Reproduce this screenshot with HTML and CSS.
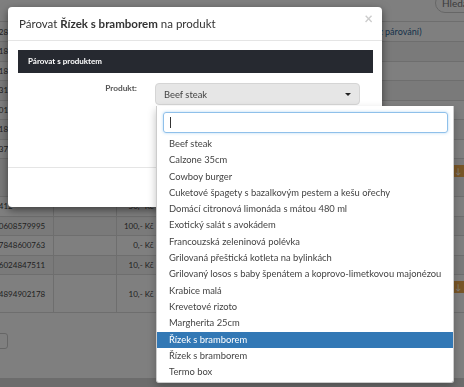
FILE: index.html
```html
<!DOCTYPE html>
<html lang="cs">
<head>
    <meta charset="UTF-8">
    <title>Párovat produkt</title>
    <link rel="stylesheet" href="styles.css">
</head>
<body>

    <div class="page">
        <div class="toolbar">
            <button class="search-btn">Hledat</button>
        </div>

        <table class="items">
            <tr><td>85940128</td><td></td><td class="price">120,- Kč</td><td></td><td class="state">(bez párování)</td><td></td></tr>
            <tr class="odd"><td>85940118</td><td></td><td class="price">90,- Kč</td><td></td><td></td><td></td></tr>
            <tr><td>85940118</td><td></td><td class="price">90,- Kč</td><td></td><td></td><td></td></tr>
            <tr class="odd"><td>85940131</td><td></td><td class="price">45,- Kč</td><td></td><td></td><td></td></tr>
            <tr><td>85940101</td><td></td><td class="price">35,- Kč</td><td></td><td></td><td></td></tr>
            <tr class="odd"><td>85940118</td><td></td><td class="price">60,- Kč</td><td></td><td></td><td></td></tr>
            <tr><td>85940137</td><td></td><td class="price">60,- Kč</td><td></td><td></td><td></td></tr>
            <tr class="odd tall"><td></td><td></td><td></td><td></td><td></td><td><span class="badge">↓</span></td></tr>
            <tr><td>859401412</td><td></td><td class="price">50,- Kč</td><td></td><td></td><td></td></tr>
            <tr class="odd"><td>8590630608579995</td><td></td><td class="price">100,- Kč</td><td></td><td></td><td></td></tr>
            <tr><td>8590617848600763</td><td></td><td class="price">0,- Kč</td><td></td><td></td><td></td></tr>
            <tr class="odd"><td>8590606024847511</td><td></td><td class="price">10,- Kč</td><td></td><td></td><td></td></tr>
            <tr class="tall"><td>8590634894902178</td><td></td><td class="price">10,- Kč</td><td></td><td></td><td><span class="badge">↓</span></td></tr>
        </table>

        <div class="pager">
            <button class="pager-btn">Další</button>
        </div>

        <div class="footer"></div>
    </div>

    <div class="backdrop"></div>

    <div class="modal">
        <div class="modal-header">
            <h4 class="modal-title">Párovat <b>Řízek s bramborem</b> na produkt</h4>
            <span class="close">&times;</span>
        </div>
        <div class="modal-body">
            <div class="panel-heading">Párovat s produktem</div>
            <div class="form-row">
                <label class="form-label">Produkt:</label>
                <div class="select">
                    <span>Beef steak</span>
                    <span class="caret"></span>
                </div>
            </div>
        </div>
        <div class="modal-footer"></div>
    </div>

    <!-- otevřený výběr produktu -->
    <div class="dropdown">
        <div class="search">
            <span class="cursor"></span>
        </div>
        <ul class="results">
            <li>Beef steak</li>
            <li>Calzone 35cm</li>
            <li>Cowboy burger</li>
            <li>Cuketové špagety s bazalkovým pestem a kešu ořechy</li>
            <li>Domácí citronová limonáda s mátou 480 ml</li>
            <li>Exotický salát s avokádem</li>
            <li>Francouzská zeleninová polévka</li>
            <li>Grilovaná přeštická kotleta na bylinkách</li>
            <li>Grilovaný losos s baby špenátem a koprovo-limetkovou majonézou</li>
            <li>Krabice malá</li>
            <li>Krevetové rizoto</li>
            <li>Margherita 25cm</li>
            <li class="active">Řízek s bramborem</li>
            <li>Řízek s bramborem</li>
            <li>Termo box</li>
        </ul>
    </div>

</body>
</html>
```

FILE: styles.css
```css
* {
    box-sizing: border-box;
}

body {
    font-family: Lato, 'Open Sans', sans-serif;
    margin: 0;
    padding: 0;
    height: 387px;
    overflow: hidden;
    background-color: #fff;
    color: #333;
}

button {
    font-family: inherit;
}

/* background page */

.page {
    width: 464px;
    height: 387px;
    display: flex;
    flex-direction: column;
}

.toolbar {
    height: 22px;
    display: flex;
    justify-content: flex-end;
    align-items: flex-end;
    border-bottom: 1px solid #ddd;
}

.search-btn {
    font-size: 10px;
    color: #777;
    background: #fff;
    border: 1px solid #ccc;
    border-radius: 10px;
    height: 20px;
    width: 60px;
    margin: 0 -31px 8px 0;
    padding: 0 6px;
    text-align: left;
}

.items {
    border-collapse: collapse;
    table-layout: fixed;
    width: 520px;
    margin-left: -44px;
    font-size: 8px;
    color: #444;
}

.items td {
    height: 19.5px;
    padding: 0 6px;
    border-bottom: 1px solid #ddd;
    border-right: 1px solid #ddd;
    white-space: nowrap;
    overflow: hidden;
}

.items td:nth-child(1) { width: 97px; padding-left: 15px; }
.items td:nth-child(2) { width: 63px; }
.items td:nth-child(3) { width: 44px; }
.items td:nth-child(4) { width: 214px; }
.items td:nth-child(5) { width: 74px; border-right: 0; }
.items td:nth-child(6) { width: 28px; border-right: 0; padding: 0 2px; }

.items tr.odd td {
    background-color: #f5f5f5;
}

.items tr.tall td {
    height: 38px;
    vertical-align: middle;
}

.items tr.tall td:nth-child(6) {
    vertical-align: top;
    padding-top: 6px;
}

.items .price {
    text-align: right;
}

.items .state {
    color: #2a6496;
    font-size: 9px;
    text-indent: -15px;
}

.badge {
    display: inline-block;
    width: 16px;
    height: 12px;
    border-radius: 2px;
    background-color: #f0ad4e;
    color: #fff;
    font-size: 8px;
    line-height: 12px;
    text-align: center;
}

.pager {
    padding: 19px 0 0;
}

.pager-btn {
    margin-left: -40px;
    width: 48px;
    height: 16px;
    background: #fff;
    border: 1px solid #ccc;
    border-radius: 3px;
}

.footer {
    margin-top: auto;
    height: 9px;
    background-color: #d8d8d8;
}

.backdrop {
    position: fixed;
    inset: 0;
    background-color: rgba(0, 0, 0, 0.5);
}

/* modal */

.modal {
    position: absolute;
    left: 8px;
    top: 7px;
    width: 374px;
    height: 200px;
    background-color: #fff;
    border-radius: 4px;
    box-shadow: 0 3px 9px rgba(0, 0, 0, 0.5);
    display: flex;
    flex-direction: column;
}

.modal-header {
    display: flex;
    justify-content: space-between;
    align-items: center;
    height: 34px;
    padding: 0 9px 0 11px;
    border-bottom: 1px solid #e5e5e5;
}

.modal-title {
    margin: 0;
    font-size: 11.5px;
    font-weight: 400;
    color: #333;
}

.modal-title b {
    font-weight: 700;
}

.close {
    font-size: 15px;
    font-weight: 700;
    color: #000;
    opacity: 0.2;
    margin-top: -12px;
}

.modal-body {
    height: 126px;
    padding: 9px 9px 0 10px;
}

.panel-heading {
    height: 23px;
    padding: 0 10px;
    background-color: #262930;
    color: #fff;
    font-size: 8px;
    font-weight: 700;
    line-height: 23px;
}

.form-row {
    display: flex;
    margin-top: 10px;
}

.form-label {
    width: 119px;
    text-align: right;
    font-size: 8.3px;
    font-weight: 700;
    color: #555;
    line-height: 10px;
}

.select {
    margin-left: 18px;
    width: 205px;
    height: 22px;
    background-color: #e6e6e6;
    border: 1px solid #d5d5d5;
    border-radius: 4px;
    display: flex;
    justify-content: space-between;
    align-items: center;
    padding: 0 8px;
    font-size: 9.4px;
    color: #444;
}

.caret {
    width: 0;
    height: 0;
    border-left: 3px solid transparent;
    border-right: 3px solid transparent;
    border-top: 3px solid #222;
}

.modal-footer {
    flex: 1;
    border-top: 1px solid #e5e5e5;
}

/* dropdown */

.dropdown {
    position: absolute;
    left: 156px;
    top: 106px;
    width: 298px;
    height: 277px;
    background-color: #fff;
    border: 1px solid #ccc;
    border-top: 0;
    border-radius: 0 0 3px 3px;
    box-shadow: 0 4px 8px rgba(0, 0, 0, 0.25);
}

.search {
    margin: 6px 5px 0 6px;
    height: 21px;
    border: 1px solid #8fc0ea;
    border-radius: 3px;
    box-shadow: 0 0 3px rgba(102, 175, 233, 0.5);
    padding: 4px 6px;
}

.cursor {
    display: block;
    width: 1px;
    height: 11px;
    background-color: #333;
}

.results {
    list-style: none;
    margin: 3px 0 0;
    padding: 0;
}

.results li {
    height: 16.3px;
    line-height: 16.3px;
    padding-left: 12px;
    font-size: 9.4px;
    color: #444;
    white-space: nowrap;
}

.results li.active {
    background-color: #3278b5;
    color: #fff;
}
```
